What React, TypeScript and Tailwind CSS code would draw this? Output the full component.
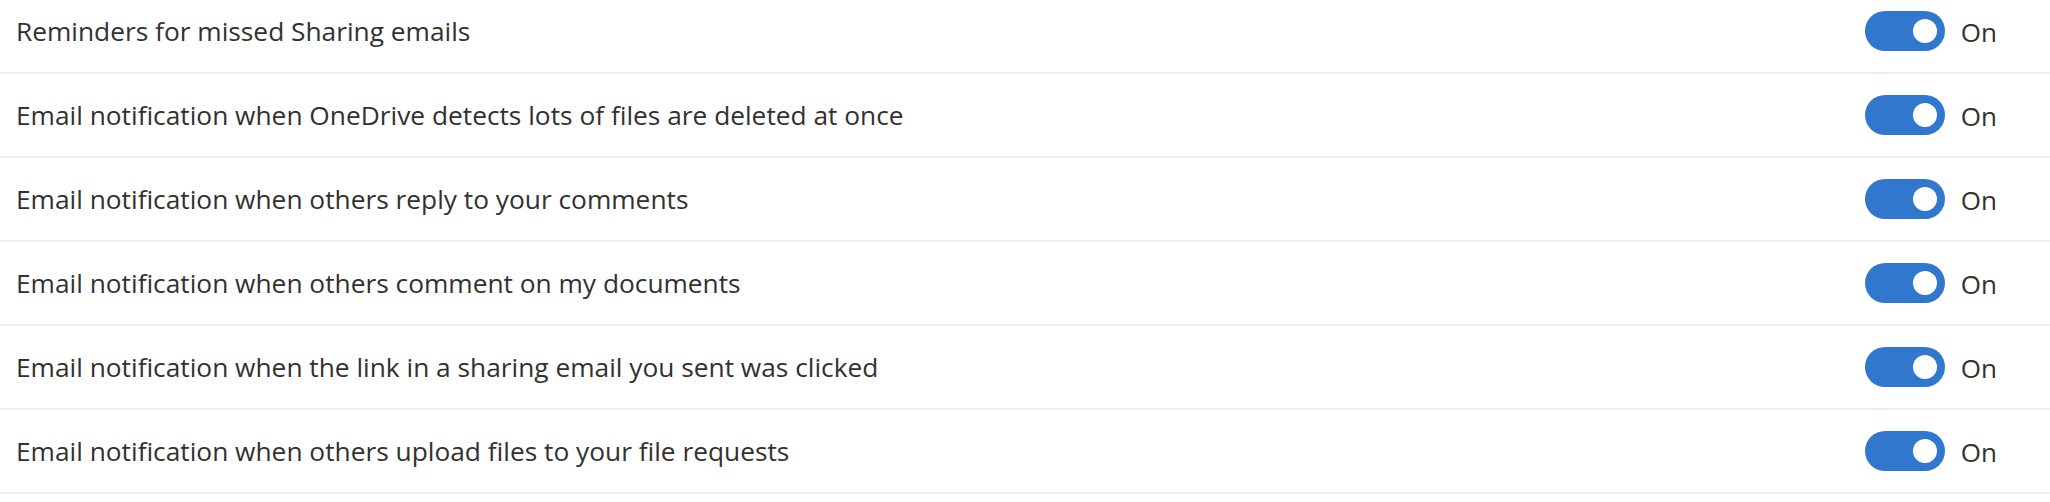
const SETTINGS = [
  "Reminders for missed Sharing emails",
  "Email notification when OneDrive detects lots of files are deleted at once",
  "Email notification when others reply to your comments",
  "Email notification when others comment on my documents",
  "Email notification when the link in a sharing email you sent was clicked",
  "Email notification when others upload files to your file requests",
];

function Toggle() {
  return (
    <div className="flex items-center gap-4">
      <div className="flex h-10 w-20 items-center justify-end rounded-full bg-[#3277ce] pr-2">
        <span className="h-6 w-6 rounded-full bg-white" />
      </div>
      <span className="pt-0.5 text-[26px] text-[#323130]">On</span>
    </div>
  );
}

export default function App() {
  return (
    <div className="h-[502px] w-[2050px] overflow-hidden bg-white font-['Open_Sans',sans-serif]">
      <div className="-mt-[10px]">
        {SETTINGS.map((label) => (
          <div
            key={label}
            className="flex h-[84px] items-center justify-between border-b-2 border-[#eeeeee] pl-4 pr-[53px]"
          >
            <span className="pt-0.5 text-[26.3px] text-[#323130]">{label}</span>
            <Toggle />
          </div>
        ))}
      </div>
    </div>
  );
}
